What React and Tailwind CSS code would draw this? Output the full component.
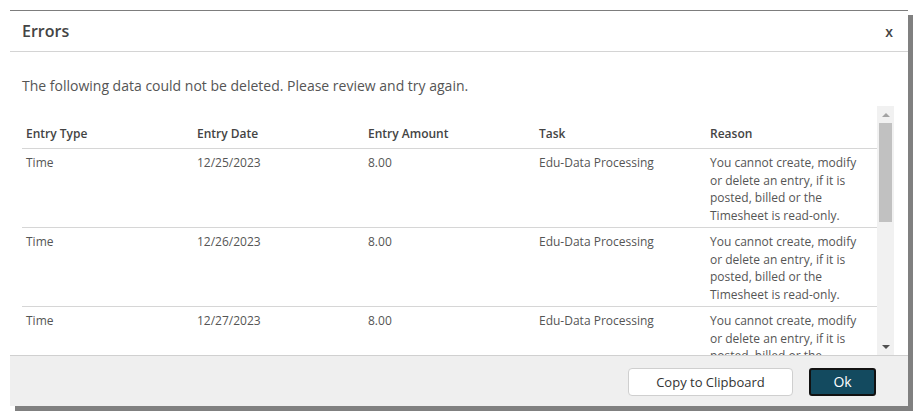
const rows = [
  { type: "Time", date: "12/25/2023", amount: "8.00", task: "Edu-Data Processing" },
  { type: "Time", date: "12/26/2023", amount: "8.00", task: "Edu-Data Processing" },
  { type: "Time", date: "12/27/2023", amount: "8.00", task: "Edu-Data Processing" },
];

const reason = [
  "You cannot create, modify",
  "or delete an entry, if it is",
  "posted, billed or the",
  "Timesheet is read-only.",
];

const headers = ["Entry Type", "Entry Date", "Entry Amount", "Task", "Reason"];

function Scrollbar() {
  return (
    <div className="flex w-[17px] shrink-0 flex-col items-center bg-[#f1f1f1]">
      <div className="flex h-[17px] w-full items-center justify-center">
        <div className="h-0 w-0 border-x-[4px] border-b-[4px] border-x-transparent border-b-[#a3a3a3]" />
      </div>
      <div className="h-[99px] w-[13px] bg-[#c1c1c1]" />
      <div className="flex-1" />
      <div className="flex h-[17px] w-full items-center justify-center">
        <div className="h-0 w-0 border-x-[4px] border-t-[4px] border-x-transparent border-t-[#505050]" />
      </div>
    </div>
  );
}

export default function App() {
  return (
    <div
      className="min-h-[416px] bg-white pl-[10px] pt-[10px]"
      style={{ fontFamily: "'Open Sans', 'Liberation Sans', sans-serif" }}
    >
      <div className="flex h-[396px] w-[898px] flex-col border-t border-[#7d7d7d] bg-white shadow-[5px_5px_0_#808080]">
        {/* Header */}
        <div className="flex h-[41px] shrink-0 items-center justify-between border-b border-[#d4d4d4] pl-[12px] pr-[15px]">
          <h2 className="text-[16px] font-semibold text-[#444]">Errors</h2>
          <span className="text-[14px] font-semibold text-[#444]">x</span>
        </div>

        {/* Body */}
        <div className="flex min-h-0 flex-1 flex-col pl-[12px] pr-[14px] pt-[24px]">
          <p className="text-[14px] leading-[20px] text-[#555]">
            The following data could not be deleted. Please review and try again.
          </p>
          <div className="mt-[10px] flex min-h-0 flex-1">
            <div className="flex-1 overflow-hidden">
              <div className="grid grid-cols-5 border-b border-[#d6d6d6] pb-[5px] pt-[19px]">
                {headers.map((h) => (
                  <div key={h} className="pl-[4px] text-[12px] font-semibold leading-[18px] text-[#444]">
                    {h}
                  </div>
                ))}
              </div>
              {rows.map((r) => (
                <div
                  key={r.date}
                  className="grid grid-cols-5 border-b border-[#d6d6d6] pb-[3px] pt-[5px] text-[12px] leading-[17.5px] text-[#555]"
                >
                  <div className="pl-[4px]">{r.type}</div>
                  <div className="pl-[4px]">{r.date}</div>
                  <div className="pl-[4px]">{r.amount}</div>
                  <div className="pl-[4px]">{r.task}</div>
                  <div className="pl-[4px]">
                    {reason.map((l) => (
                      <span key={l} className="block whitespace-nowrap">
                        {l}
                      </span>
                    ))}
                  </div>
                </div>
              ))}
            </div>
            <Scrollbar />
          </div>
        </div>

        {/* Footer */}
        <div className="flex h-[51px] shrink-0 items-start justify-end gap-[16px] border-t border-[#d0d0d0] bg-[#efefef] pr-[32px] pt-[12px]">
          <button className="h-[28px] w-[165px] rounded-[4px] border border-[#cfcfcf] bg-white text-[13px] leading-[26px] text-[#333]">
            Copy to Clipboard
          </button>
          <button className="h-[28px] w-[67px] rounded-[3px] border-2 border-[#111] bg-[#134a5f] text-[14px] leading-[24px] text-white">
            Ok
          </button>
        </div>
      </div>
    </div>
  );
}
